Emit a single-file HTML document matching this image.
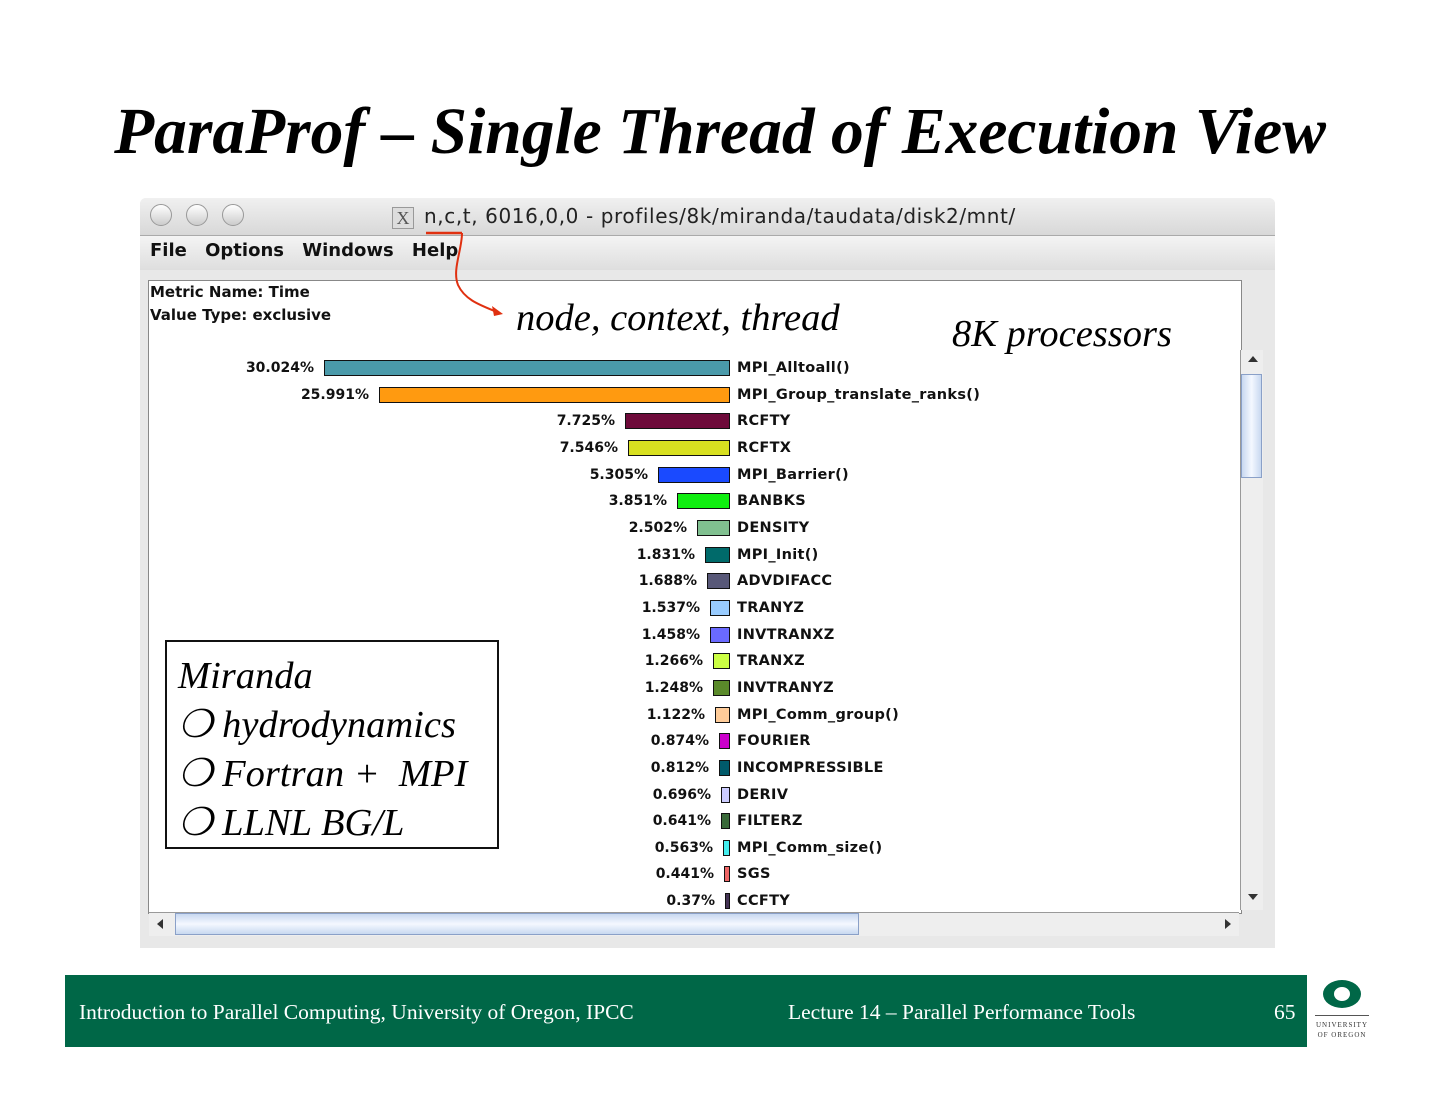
<!DOCTYPE html>
<html><head><style>
body{margin:0;width:1440px;height:1113px;background:#fff;position:relative;overflow:hidden;font-family:"Liberation Serif",serif}
.a{position:absolute}
.t{font-family:"DejaVu Sans",sans-serif;font-weight:bold;font-size:15px;color:#111;letter-spacing:0px}
.pct{position:absolute;text-align:right;width:160px;font-family:"DejaVu Sans",sans-serif;font-weight:bold;font-size:14px;color:#111}
.bar{position:absolute;height:16px;border:1.5px solid #111;box-sizing:border-box}
.lab{position:absolute;left:737px;font-family:"DejaVu Sans",sans-serif;font-weight:bold;font-size:14.5px;color:#111;letter-spacing:0.3px}
</style></head><body>
<div class="a" style="left:0;width:1440px;top:95px;text-align:center;font-size:65.5px;font-weight:bold;font-style:italic">ParaProf – Single Thread of Execution View</div>

<div class="a" style="left:140px;top:198px;width:1135px;height:750px;background:#e8e8e8;border-radius:6px 6px 0 0"></div>
<div class="a" style="left:140px;top:198px;width:1135px;height:37px;background:linear-gradient(#f0f0f0,#d8d8d8);border-radius:6px 6px 0 0;border-bottom:1px solid #aaa"></div>
<div class="a" style="left:150px;top:204px;width:20px;height:20px;border-radius:50%;border:1px solid #999;background:linear-gradient(#fff,#ccc)"></div>
<div class="a" style="left:186px;top:204px;width:20px;height:20px;border-radius:50%;border:1px solid #999;background:linear-gradient(#fff,#ccc)"></div>
<div class="a" style="left:222px;top:204px;width:20px;height:20px;border-radius:50%;border:1px solid #999;background:linear-gradient(#fff,#ccc)"></div>
<div class="a" style="left:392px;top:207px;width:20px;height:20px;border:1px solid #999;background:#ddd;font-size:18px;text-align:center;line-height:20px;color:#555">X</div>
<div class="a" style="left:424px;top:204px;font-family:'DejaVu Sans',sans-serif;font-size:20px;letter-spacing:0.6px;color:#222">n,c,t, 6016,0,0 - profiles/8k/miranda/taudata/disk2/mnt/</div>
<div class="a" style="left:140px;top:236px;width:1135px;height:34px;background:linear-gradient(#f4f4f4,#dedede)"></div>
<div class="a t" style="left:150px;top:240px;font-size:18px;word-spacing:12px">File Options Windows Help</div>

<div class="a" style="left:148px;top:280px;width:1092px;height:632px;background:#fff;border:1px solid #888"></div>
<div class="a t" style="left:150px;top:283px">Metric Name: Time</div>
<div class="a t" style="left:150px;top:306px">Value Type: exclusive</div>

<svg class="a" style="left:0;top:0" width="1440" height="1113"><path d="M426 233 L462 233" stroke="#e03010" stroke-width="2.5"/><path d="M462 233 C462 250 452 270 458 285 C465 300 480 305 497 312" stroke="#e03010" stroke-width="2" fill="none"/><path d="M503 314 L492 306 L494 316 Z" fill="#e03010"/></svg>
<div class="a" style="left:516px;top:296px;font-size:38.5px;font-style:italic">node, context, thread</div>
<div class="a" style="left:952px;top:312px;font-size:38.5px;font-style:italic">8K processors</div>

<div class="pct" style="left:154px;top:360px">30.024%</div><div class="bar" style="left:324px;top:360px;width:406px;background:#4a9aaa"></div><div class="lab" style="top:360px">MPI_Alltoall()</div>
<div class="pct" style="left:209px;top:387px">25.991%</div><div class="bar" style="left:379px;top:387px;width:351px;background:#ff9a10"></div><div class="lab" style="top:387px">MPI_Group_translate_ranks()</div>
<div class="pct" style="left:455px;top:413px">7.725%</div><div class="bar" style="left:625px;top:413px;width:105px;background:#6e0a3a"></div><div class="lab" style="top:413px">RCFTY</div>
<div class="pct" style="left:458px;top:440px">7.546%</div><div class="bar" style="left:628px;top:440px;width:102px;background:#d8e020"></div><div class="lab" style="top:440px">RCFTX</div>
<div class="pct" style="left:488px;top:467px">5.305%</div><div class="bar" style="left:658px;top:467px;width:72px;background:#1a4aff"></div><div class="lab" style="top:467px">MPI_Barrier()</div>
<div class="pct" style="left:507px;top:493px">3.851%</div><div class="bar" style="left:677px;top:493px;width:53px;background:#10ee10"></div><div class="lab" style="top:493px">BANBKS</div>
<div class="pct" style="left:527px;top:520px">2.502%</div><div class="bar" style="left:697px;top:520px;width:33px;background:#80c090"></div><div class="lab" style="top:520px">DENSITY</div>
<div class="pct" style="left:535px;top:547px">1.831%</div><div class="bar" style="left:705px;top:547px;width:25px;background:#006a6a"></div><div class="lab" style="top:547px">MPI_Init()</div>
<div class="pct" style="left:537px;top:573px">1.688%</div><div class="bar" style="left:707px;top:573px;width:23px;background:#585878"></div><div class="lab" style="top:573px">ADVDIFACC</div>
<div class="pct" style="left:540px;top:600px">1.537%</div><div class="bar" style="left:710px;top:600px;width:20px;background:#99ccff"></div><div class="lab" style="top:600px">TRANYZ</div>
<div class="pct" style="left:540px;top:627px">1.458%</div><div class="bar" style="left:710px;top:627px;width:20px;background:#6a6aff"></div><div class="lab" style="top:627px">INVTRANXZ</div>
<div class="pct" style="left:543px;top:653px">1.266%</div><div class="bar" style="left:713px;top:653px;width:17px;background:#ccff44"></div><div class="lab" style="top:653px">TRANXZ</div>
<div class="pct" style="left:543px;top:680px">1.248%</div><div class="bar" style="left:713px;top:680px;width:17px;background:#5a8a2a"></div><div class="lab" style="top:680px">INVTRANYZ</div>
<div class="pct" style="left:545px;top:707px">1.122%</div><div class="bar" style="left:715px;top:707px;width:15px;background:#ffcc99"></div><div class="lab" style="top:707px">MPI_Comm_group()</div>
<div class="pct" style="left:549px;top:733px">0.874%</div><div class="bar" style="left:719px;top:733px;width:11px;background:#cc00cc"></div><div class="lab" style="top:733px">FOURIER</div>
<div class="pct" style="left:549px;top:760px">0.812%</div><div class="bar" style="left:719px;top:760px;width:11px;background:#005a6a"></div><div class="lab" style="top:760px">INCOMPRESSIBLE</div>
<div class="pct" style="left:551px;top:787px">0.696%</div><div class="bar" style="left:721px;top:787px;width:9px;background:#ccccff"></div><div class="lab" style="top:787px">DERIV</div>
<div class="pct" style="left:551px;top:813px">0.641%</div><div class="bar" style="left:721px;top:813px;width:9px;background:#3a6a3a"></div><div class="lab" style="top:813px">FILTERZ</div>
<div class="pct" style="left:553px;top:840px">0.563%</div><div class="bar" style="left:723px;top:840px;width:7px;background:#44eeee"></div><div class="lab" style="top:840px">MPI_Comm_size()</div>
<div class="pct" style="left:554px;top:866px">0.441%</div><div class="bar" style="left:724px;top:866px;width:6px;background:#ee6666"></div><div class="lab" style="top:866px">SGS</div>
<div class="pct" style="left:555px;top:893px">0.37%</div><div class="bar" style="left:725px;top:893px;width:5px;background:#443355"></div><div class="lab" style="top:893px">CCFTY</div>

<div class="a" style="left:1240px;top:350px;width:22px;height:560px;background:#eee;border-left:1px solid #999"></div>
<div class="a" style="left:1248px;top:356px;width:0;height:0;border:5px solid transparent;border-bottom:6px solid #333;border-top:0"></div>
<div class="a" style="left:1241px;top:374px;width:21px;height:104px;background:linear-gradient(90deg,#c8d8f0,#f4f8ff,#c8d8f0);border:1px solid #8aa0c8;box-sizing:border-box"></div>
<div class="a" style="left:1248px;top:894px;width:0;height:0;border:5px solid transparent;border-top:6px solid #333;border-bottom:0"></div>
<div class="a" style="left:149px;top:912px;width:1090px;height:23px;background:#eee;border-top:1px solid #999"></div>
<div class="a" style="left:175px;top:913px;width:684px;height:22px;background:linear-gradient(#c8d8f0,#f4f8ff,#c8d8f0);border:1px solid #8aa0c8;box-sizing:border-box"></div>
<div class="a" style="left:157px;top:919px;width:0;height:0;border:5px solid transparent;border-right:6px solid #333;border-left:0"></div>
<div class="a" style="left:1225px;top:919px;width:0;height:0;border:5px solid transparent;border-left:6px solid #333;border-right:0"></div>

<div class="a" style="left:165px;top:640px;width:334px;height:209px;border:2px solid #111;box-sizing:border-box;background:#fff"></div>
<div class="a" style="left:178px;top:652px;font-size:38.5px;font-style:italic;line-height:49px">Miranda<br>❍ hydrodynamics<br>❍ Fortran + &nbsp;MPI<br>❍ LLNL BG/L</div>

<div class="a" style="left:65px;top:975px;width:1242px;height:72px;background:#006747"></div>
<div class="a" style="left:79px;top:1000px;font-size:21.5px;color:#fff">Introduction to Parallel Computing, University of Oregon, IPCC</div>
<div class="a" style="left:788px;top:1000px;font-size:21.5px;color:#fff">Lecture 14 – Parallel Performance Tools</div>
<div class="a" style="left:1274px;top:1000px;font-size:21.5px;color:#fff">65</div>
<div class="a" style="left:1323px;top:980px;width:38px;height:28px;border:7px solid #006747;border-left-width:11px;border-right-width:11px;border-radius:50%;box-sizing:border-box"></div>
<div class="a" style="left:1315px;top:1015px;width:54px;border-top:1px solid #555"></div>
<div class="a" style="left:1312px;top:1020px;width:60px;text-align:center;font-size:7px;letter-spacing:1px;color:#333;line-height:10px">UNIVERSITY<br>OF OREGON</div>
</body></html>
